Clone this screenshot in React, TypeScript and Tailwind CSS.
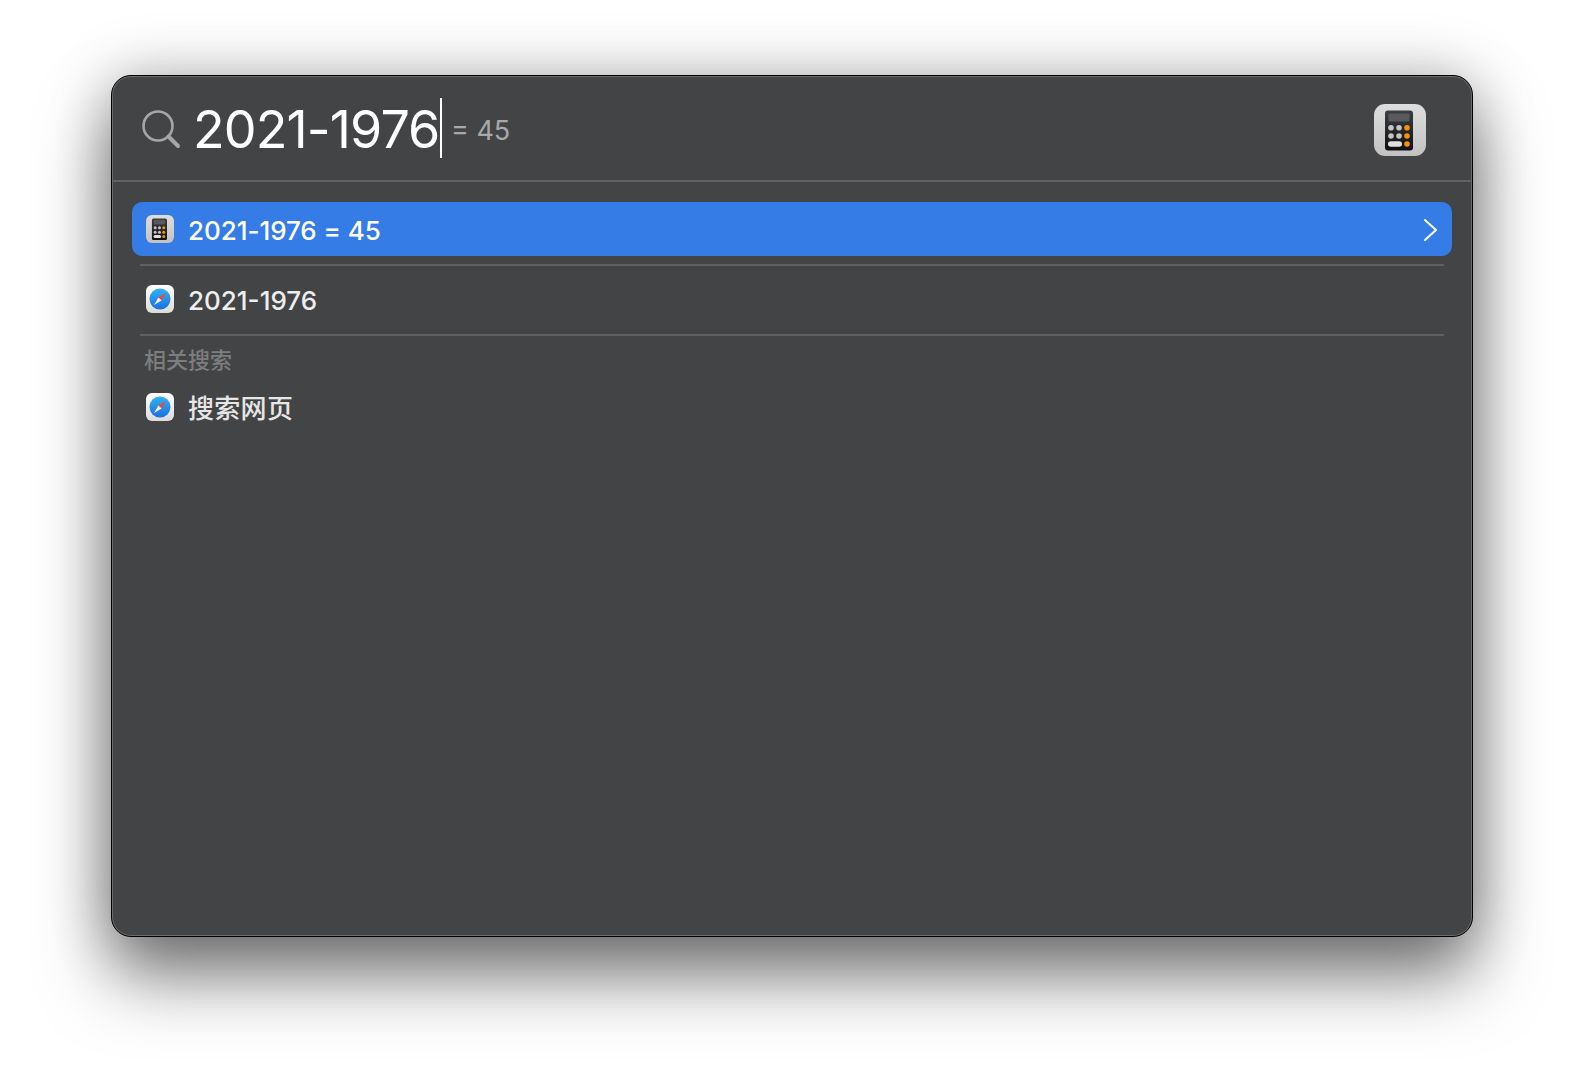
import React from "react";

function CalcIcon({ className, id }: { className: string; id: string }) {
  return (
    <svg viewBox="0 0 52 52" className={className}>
      <defs>
        <linearGradient id={id + "bg"} x1="0" y1="0" x2="0" y2="1">
          <stop offset="0" stopColor="#dedede" />
          <stop offset="1" stopColor="#c2c2c2" />
        </linearGradient>
        <linearGradient id={id + "body"} x1="0" y1="0" x2="0" y2="1">
          <stop offset="0" stopColor="#3c3e42" />
          <stop offset="1" stopColor="#101010" />
        </linearGradient>
      </defs>
      <rect x="0" y="0" width="52" height="52" rx="11" fill={`url(#${id}bg)`} />
      <rect x="11" y="6.5" width="28" height="40" rx="3" fill={`url(#${id}body)`} />
      <rect x="14.5" y="9.5" width="21" height="8" rx="1" fill="#585a5e" />
      <circle cx="17" cy="23.7" r="2.8" fill="#c4c4c4" />
      <circle cx="25" cy="23.7" r="2.8" fill="#c4c4c4" />
      <circle cx="33" cy="23.7" r="2.8" fill="#f5920a" />
      <circle cx="17" cy="32" r="2.8" fill="#c4c4c4" />
      <circle cx="25" cy="32" r="2.8" fill="#c4c4c4" />
      <circle cx="33" cy="32" r="2.8" fill="#f5920a" />
      <rect x="14" y="37.2" width="14" height="5.6" rx="2.8" fill="#e0e0e0" />
      <circle cx="33" cy="40" r="2.8" fill="#f5920a" />
    </svg>
  );
}

function SafariIcon({ id }: { id: string }) {
  return (
    <svg viewBox="0 0 28 28" className="w-[28px] h-[28px] shrink-0">
      <defs>
        <linearGradient id={id + "bg"} x1="0" y1="0" x2="0" y2="1">
          <stop offset="0" stopColor="#ffffff" />
          <stop offset="1" stopColor="#dcdcdc" />
        </linearGradient>
        <linearGradient id={id + "c"} x1="0" y1="0" x2="0" y2="1">
          <stop offset="0" stopColor="#2fb4f5" />
          <stop offset="1" stopColor="#1c6fe0" />
        </linearGradient>
      </defs>
      <rect width="28" height="28" rx="6" fill={`url(#${id}bg)`} />
      <circle cx="14" cy="14" r="10.5" fill={`url(#${id}c)`} />
      <polygon points="20,8 12.4,12.4 15.6,15.6" fill="#f0453a" />
      <polygon points="8,20 12.4,12.4 15.6,15.6" fill="#f2f2f2" />
    </svg>
  );
}

function Sep() {
  return <div className="h-[2px] mx-[8px] bg-[#5f6063]" />;
}

export default function App() {
  return (
    <div
      className="w-[1584px] h-[1084px] bg-white pl-[111px] pt-[75px] overflow-hidden"
      style={{ fontFamily: 'Inter, "Noto Sans CJK SC", sans-serif' }}
    >
      <div className="w-[1362px] h-[862px] rounded-[20px] bg-[#434446] border border-black shadow-[0_40px_70px_rgba(0,0,0,0.5),0_0_60px_rgba(0,0,0,0.25)] overflow-hidden">
        <div className="h-full rounded-[19px] border border-[#6a6b6d]">
          <div className="h-[105px] flex items-center pl-[28px] pr-[44px] border-b-2 border-[#5f6063]">
            <svg viewBox="0 0 40 40" className="w-[40px] h-[40px] shrink-0" fill="none" stroke="#a6a6a7" strokeLinecap="round">
              <circle cx="17" cy="17" r="14.5" strokeWidth="2.6" />
              <path d="M27.5 27.5 L37 37" strokeWidth="4" />
            </svg>
            <span className="ml-[12px] text-[52px] leading-none text-white tracking-[-0.9px] font-normal mt-[2px]">2021-1976</span>
            <span className="w-[1.5px] h-[60px] bg-white ml-[1px] mt-[-1px]" />
            <span className="ml-[9px] text-[27px] text-[#a8a8a9] font-normal mt-[6px]">= 45</span>
            <div className="ml-auto mt-[2px] mr-[1px]">
              <CalcIcon id="big" className="w-[52px] h-[52px] block" />
            </div>
          </div>
          <div className="px-[19px] pt-[20px]">
            <div className="h-[54px] rounded-[10px] bg-[#367ce6] flex items-center pl-[14px] pr-[14px]">
              <CalcIcon id="small" className="w-[28px] h-[28px] shrink-0" />
              <span className="ml-[14px] mt-[2px] text-[26px] text-white font-medium tracking-[-0.05px]">2021-1976 = 45</span>
              <svg viewBox="0 0 16 24" className="ml-auto w-[16px] h-[24px] mt-[1px]" fill="none" stroke="#fff" strokeWidth="2" strokeLinecap="round" strokeLinejoin="round">
                <path d="M3 2 L14 12 L3 22" />
              </svg>
            </div>
            <div className="mt-[8px]"><Sep /></div>
            <div className="h-[68px] flex items-center pl-[14px]">
              <div className="mt-[-2px]"><SafariIcon id="a" /></div>
              <span className="ml-[14px] text-[26px] text-[#eeeeee] font-medium">2021-1976</span>
            </div>
            <Sep />
            <div className="pl-[12px] mt-[10px] text-[22px] leading-[28px] text-[#7c7d7e] font-medium">相关搜索</div>
            <div className="mt-[11px] h-[44px] flex items-center pl-[14px]">
              <SafariIcon id="b" />
              <span className="ml-[14px] mt-[3px] text-[26px] tracking-[0.3px] text-[#e6e6e6] font-medium">搜索网页</span>
            </div>
          </div>
        </div>
      </div>
    </div>
  );
}
